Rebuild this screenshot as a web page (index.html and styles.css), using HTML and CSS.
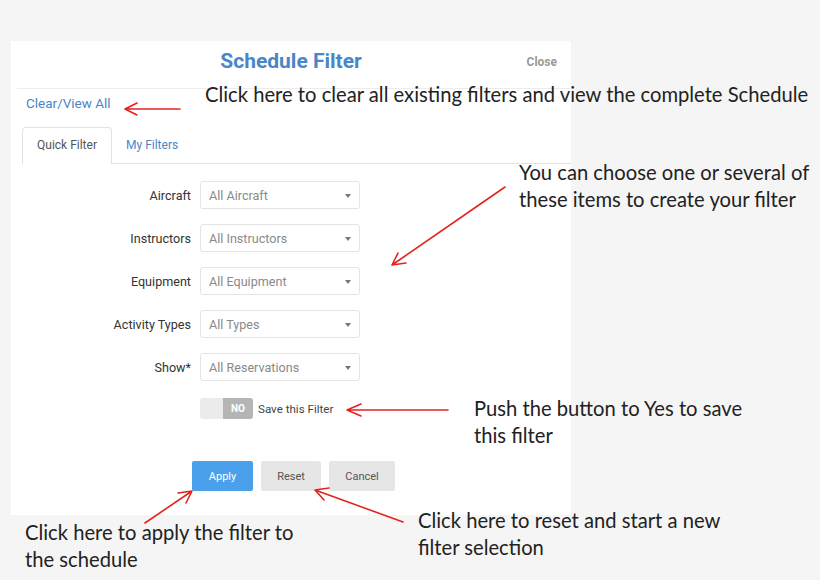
FILE: index.html
```html
<!DOCTYPE html>
<html>
<head>
<meta charset="utf-8">
<link rel="stylesheet" href="styles.css">
</head>
<body>
<div class="stage">
  <div class="panel">
    <div class="header">
      <span></span>
      <h1 class="title">Schedule Filter</h1>
      <a class="close">Close</a>
    </div>
    <div class="sep"></div>
    <a class="clear">Clear/View All</a>
    <div class="tabs">
      <div class="tab active">Quick Filter</div>
      <div class="tab">My Filters</div>
    </div>
    <div class="form">
      <label>Aircraft</label><div class="select">All Aircraft<i class="caret"></i></div>
      <label>Instructors</label><div class="select">All Instructors<i class="caret"></i></div>
      <label>Equipment</label><div class="select">All Equipment<i class="caret"></i></div>
      <label>Activity Types</label><div class="select">All Types<i class="caret"></i></div>
      <label>Show*</label><div class="select">All Reservations<i class="caret"></i></div>
      <span></span>
      <div class="save">
        <div class="toggle"><span class="off"></span><span class="no">NO</span></div>
        <span class="save-label">Save this Filter</span>
      </div>
    </div>
    <div class="buttons">
      <button class="btn primary">Apply</button>
      <button class="btn">Reset</button>
      <button class="btn cancel">Cancel</button>
    </div>
  </div>

  <div class="note n1">Click here to clear all existing filters and view the complete Schedule</div>
  <div class="note n2">You can choose one or several of<br>these items to create your filter</div>
  <div class="note n3">Push the button to Yes to save<br>this filter</div>
  <div class="note n4">Click here to reset and start a new<br>filter selection</div>
  <div class="note n5">Click here to apply the filter to<br>the schedule</div>

  <svg class="arrows" width="820" height="580" viewBox="0 0 820 580">
    <g fill="none" stroke="#e42320" stroke-width="1.6" stroke-linecap="round" stroke-linejoin="round">
      <path d="M180 109 L125 109 M137 103 L125 109 L137 115"/>
      <path d="M505 187 L392 265 M406 263 L392 265 L398 253"/>
      <path d="M448 410 L347 410 M361 404 L347 410 L361 416"/>
      <path d="M145 523 L192 491 M178 493 L192 491 L186 503"/>
      <path d="M403 522 L315 490 M324 500 L315 490 L329 488"/>
    </g>
  </svg>
</div>
</body>
</html>
```

FILE: styles.css
```css
html, body {
  margin: 0;
  padding: 0;
  background: #f5f5f5;
}
.stage {
  position: relative;
  width: 820px;
  height: 580px;
  overflow: hidden;
  font-family: Roboto, "Liberation Sans", sans-serif;
}
.panel {
  width: 560px;
  height: 474px;
  margin: 41px 0 0 11px;
  background: #fff;
  display: flex;
  flex-direction: column;
}
.header {
  height: 47px;
  display: grid;
  grid-template-columns: 1fr auto 1fr;
  align-items: start;
}
.title {
  margin: 8px 0 0;
  font-size: 21px;
  line-height: 24px;
  font-weight: 700;
  color: #4a86c7;
}
.close {
  justify-self: end;
  margin: 14px 14px 0 0;
  font-size: 12px;
  line-height: 14px;
  font-weight: 700;
  color: #9a9a9a;
}
.sep {
  margin: 0 0 0 6px;
  border-top: 1px solid #ececec;
}
.clear {
  margin: 6px 0 0 15px;
  font-size: 13.5px;
  line-height: 16px;
  color: #4a86c7;
  align-self: flex-start;
}
.tabs {
  margin: 16px 0 0 11px;
  height: 36px;
  display: flex;
  border-bottom: 1px solid #e2e2e2;
}
.tab {
  padding: 0 14px;
  font-size: 12px;
  line-height: 36px;
  color: #4a86c7;
}
.tab.active {
  width: 90px;
  box-sizing: border-box;
  padding: 0;
  text-align: center;
  color: #555;
  border: 1px solid #e2e2e2;
  border-bottom: none;
  border-radius: 4px 4px 0 0;
  background: #fff;
  height: 37px;
  line-height: 35px;
}
.form {
  margin-top: 17px;
  display: grid;
  grid-template-columns: 180px 160px;
  column-gap: 9px;
  row-gap: 15px;
  align-items: center;
}
.form label {
  text-align: right;
  font-size: 12.6px;
  color: #333;
}
.select {
  position: relative;
  height: 28px;
  box-sizing: border-box;
  border: 1px solid #e4e4e4;
  border-radius: 3px;
  padding-left: 8px;
  font-size: 12.6px;
  line-height: 27px;
  color: #8a8a8a;
}
.caret {
  position: absolute;
  right: 8px;
  top: 12px;
  width: 0;
  height: 0;
  border-left: 3.5px solid transparent;
  border-right: 3.5px solid transparent;
  border-top: 4px solid #777;
}
.save {
  display: flex;
  align-items: center;
  gap: 5px;
  margin-top: 2px;
}
.toggle {
  display: flex;
  width: 53px;
  height: 21px;
  border-radius: 3px;
  overflow: hidden;
}
.toggle .off {
  width: 23px;
  background: #ebebeb;
}
.toggle .no {
  width: 30px;
  background: #b5b5b5;
  color: #fff;
  font-size: 10px;
  font-weight: 700;
  text-align: center;
  line-height: 21px;
}
.save-label {
  font-size: 11.6px;
  color: #444;
}
.buttons {
  margin: 42px 0 0 181px;
  display: flex;
  gap: 8px;
}
.btn {
  height: 30px;
  width: 60px;
  border: none;
  border-radius: 2px;
  background: #e6e6e6;
  color: #555;
  font-family: Roboto, "Liberation Sans", sans-serif;
  font-size: 11px;
  padding: 0;
}
.btn.primary {
  width: 61px;
  background: #4aa0ea;
  color: #fff;
}
.btn.cancel {
  width: 66px;
}
.note {
  position: absolute;
  font-family: Lato, "Open Sans", sans-serif;
  font-size: 20.2px;
  line-height: 27px;
  color: #222;
  white-space: nowrap;
}
.n1 { left: 205px; top: 81px; }
.n2 { left: 519px; top: 159px; }
.n3 { left: 474px; top: 395px; }
.n4 { left: 418px; top: 507px; }
.n5 { left: 25px; top: 519px; }
.arrows {
  position: absolute;
  left: 0;
  top: 0;
  pointer-events: none;
}
```
